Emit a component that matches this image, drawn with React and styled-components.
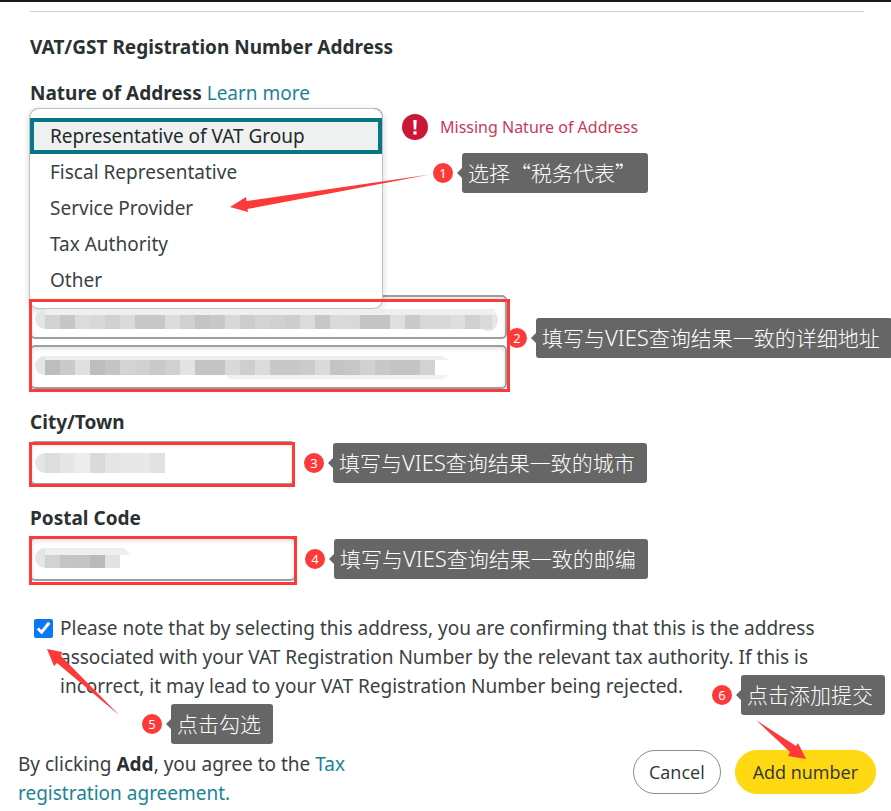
import React, { useState } from "react";
import styled, { createGlobalStyle, css } from "styled-components";

const GlobalStyle = createGlobalStyle`
  * {
    box-sizing: border-box;
  }
  body {
    margin: 0;
    background: #fff;
    color: #3a4143;
    font-family: "Noto Sans", "Noto Sans CJK SC", sans-serif;
    font-size: 19px;
    line-height: 29px;
    overflow-x: hidden;
  }
`;

const RED = "#fc3a3a";
const TEAL = "#077686";

const Page = styled.main`
  border-top: 2px solid #1a1a1c;
  padding-top: 9px;
`;

const Form = styled.form`
  padding: 0 27px 0 30px;
`;

const Divider = styled.hr`
  height: 1px;
  margin: 0;
  border: 0;
  background: #ced4d4;
`;

const Title = styled.h2`
  margin: 23px 0 22px;
  font-size: 19px;
  line-height: 24px;
  font-weight: 700;
  color: #2b3132;
`;

const Label = styled.label`
  display: block;
  line-height: 24px;
  font-weight: 700;
  color: #2b3132;
`;

const LabelRow = styled.div`
  display: flex;
  gap: 5px;
  line-height: 24px;
  margin-bottom: 3px;
`;

const Link = styled.a`
  color: #1c8394;
  text-decoration: none;
`;

const NatureRow = styled.div`
  position: relative;
  display: flex;
  align-items: flex-start;
  gap: 19px;
`;

const Dropdown = styled.div`
  position: relative;
  width: 353px;
`;

const Select = styled.select`
  display: block;
  width: 100%;
  height: 38px;
  border: 1px solid #a2a9a9;
  border-radius: 8px;
  background: #fff;
  appearance: none;
`;

const Menu = styled.ul`
  position: absolute;
  z-index: 1;
  top: 0;
  left: -1px;
  right: 0;
  margin: 0;
  padding: 9px 0 10px;
  list-style: none;
  background: #fff;
  border: 1px solid #bdc3c3;
  border-radius: 10px;
  box-shadow: 0 2px 6px rgba(15, 17, 17, 0.18);
`;

const Option = styled.li`
  height: 36px;
  padding: 0 20px;
  line-height: 36px;
  cursor: pointer;
  ${(props) => {
    if (props.$active) {
      return css`
        padding: 0 16px;
        line-height: 28px;
        color: #24292a;
        background: #eff1f1;
        border: 4px solid ${TEAL};
      `;
    }
  }}
`;

const Messages = styled.div`
  display: grid;
  gap: 7px;
`;

const ErrorText = styled.p`
  display: flex;
  align-items: center;
  gap: 12px;
  height: 38px;
  margin: 0;
  font-size: 16px;
  color: #c93a5a;
`;

const FieldRow = styled.div`
  display: flex;
  align-items: center;
  gap: 9px;
`;

const StreetRow = styled(FieldRow)`
  gap: 0;
  margin: 102px 0 21px;
`;

const Field = styled.div`
  position: relative;
  flex: none;
  display: grid;
  gap: 6px;
  width: ${(props) => props.$width}px;
`;

const FieldGroup = styled.div`
  display: grid;
  gap: 7px;
  margin-bottom: 21px;
`;

const Input = styled.input`
  width: 100%;
  height: 44px;
  padding: 0 10px;
  font: inherit;
  background: #fff;
  border: 2px solid #9aa0a0;
  border-radius: 5px;
  box-shadow: inset 0 2px 4px rgba(15, 17, 17, 0.12);
  outline: none;
`;

const Frame = styled.span`
  position: absolute;
  z-index: 2;
  inset: ${(props) => props.$inset};
  border: 3px solid ${RED};
  pointer-events: none;
`;

const Overlay = styled.svg`
  position: absolute;
  z-index: 2;
  top: ${(props) => props.$top}px;
  left: ${(props) => props.$left}px;
  overflow: visible;
  pointer-events: none;
`;

const Note = styled.div`
  position: relative;
  z-index: 3;
  display: flex;
  align-items: center;
  gap: 9px;
  white-space: nowrap;
`;

const NatureNote = styled(Note)`
  margin-left: 31px;
`;

const StreetNote = styled(Note)`
  margin-bottom: 8px;
`;

const ConfirmNote = styled(Note)`
  margin: 3px 0 0 112px;
`;

const SubmitNote = styled(Note)`
  position: absolute;
  right: -9px;
  bottom: 79px;
`;

const Step = styled.span`
  width: 20px;
  height: 20px;
  border-radius: 50%;
  background: ${RED};
  color: #fff;
  font-size: 13px;
  line-height: 20px;
  text-align: center;
`;

const Bubble = styled.span`
  position: relative;
  height: 40px;
  padding: 0 12px 0 6px;
  border-radius: 3px;
  background: #666;
  color: #fff;
  font-family: "Noto Sans CJK SC", sans-serif;
  font-weight: 300;
  font-size: 21px;
  line-height: 38px;
  &::before {
    content: "";
    position: absolute;
    top: 15px;
    left: -5px;
    border: 5px solid transparent;
    border-left: 0;
    border-right-color: #666;
  }
`;

const Latin = styled.span`
  font-family: "Noto Sans", sans-serif;
  font-size: 22px;
`;

const Confirm = styled.div`
  position: relative;
  display: flex;
  align-items: flex-start;
  gap: 7px;
  margin-top: 33px;
  padding-left: 4px;
  label {
    max-width: 790px;
  }
`;

const Checkbox = styled.input`
  flex: none;
  width: 19px;
  height: 19px;
  margin: 5px 0 0;
  accent-color: #0a78f5;
`;

const Footer = styled.footer`
  display: flex;
  justify-content: space-between;
  align-items: flex-start;
  margin-top: 6px;
  padding: 0 15px 3px 18px;
`;

const Agreement = styled.p`
  max-width: 370px;
  margin: 0;
  b {
    font-weight: 700;
    color: #2b3132;
  }
`;

const Actions = styled.div`
  position: relative;
  display: flex;
  gap: 14px;
`;

const Button = styled.button`
  height: 44px;
  padding: 0 15px;
  font-family: "Open Sans", sans-serif;
  font-size: 18px;
  color: #2f3638;
  background: #fff;
  border: 1px solid #868d8d;
  border-radius: 22px;
  cursor: pointer;
  ${(props) => {
    if (props.$primary) {
      return css`
        padding: 0 17px;
        background: #ffd814;
        border-color: #ffd814;
      `;
    }
  }}
`;

const options = [
  "Representative of VAT Group",
  "Fiscal Representative",
  "Service Provider",
  "Tax Authority",
  "Other",
];

// shades of the blocks that hide the private values, 15px per block
const street1 = ["d2d4d4", "c6c6c6", "dbdbdb", "d8d8d8", "d1d1d1", "d8dbda", "c7c9c9", "c7c9c9", "dbdddc", "cfd1d0", "c3c5c4", "c8c8c8", "d8d8d8", "cacdcc", "d3d5d4", "d0d2d1", "cdcdcd", "dcdcdc", "c7c7c7", "d8dbda", "d9d9d9", "c3c5c4", "c3c5c4", "dfdfdf", "cacaca", "d9d9d9", "d6d9d8", "dedede", "cfd1d0", "dadada"];
const street2 = ["bdbdbd", "cacaca", "dfe1e0", "bbbebd", "c4c4c4", "d4d4d4", "d1d1d1", "c9c9c9", "d0d0d0", "e3e3e3", "c4c4c4", "c4c4c4", "d9d9d9", "cecece", "dbdbdb", "c7c9c8", "c8c8c8", "cbcbcb", "dadada", "c4c4c4", "c6c8c7", "d0d2d1", "c8c8c8", "c4c4c4", "c4c4c4", "d1d3d2"];
const city = ["dddddd", "e6e6e6", "ededed", "dadada", "e5e5e5", "e8e8e8", "e7e9e8", "e1e1e1"];
const postal = ["d2d2d2", "c4c6c5", "c4c4c4", "bababa", "e1e3e2"];

function Mosaic({ top, shades, height, head = 0, foot = 0, tail = 0, round }) {
  const width = shades.length * 15;
  const middle = head + height / 2;
  return (
    <Overlay $top={top} $left={15} width={width} height={height + head + foot} aria-hidden="true">
      <ellipse cx="0" cy={(head + height) / 2} rx="10" ry={(head + height) / 2} fill="#e4e6e5" />
      {round && <ellipse cx={width - 7} cy={middle - 2} rx="10" ry={middle - 2} fill="#e6e6e6" />}
      <path d={`M0 0H${width + tail / 2}L${width + tail} ${head}H0Z`} fill="#eef0ef" />
      <path d={`M180 ${head + height}H${width + tail}L${width + tail / 2} ${head + height + foot}H185Z`} fill={foot ? "#f0f1f1" : "none"} />
      {shades.map((shade, i) => (
        <rect
          key={i}
          x={i * 15}
          y={head}
          width={round && i === shades.length - 1 ? 12 : 15}
          height={height}
          fill={"#" + shade}
        />
      ))}
    </Overlay>
  );
}

export default function App() {
  const [nature, setNature] = useState(options[0]);
  const [confirmed, setConfirmed] = useState(true);

  return (
    <>
      <GlobalStyle />
      <Page>
        <Form id="vat-form" onSubmit={(e) => e.preventDefault()}>
          <Divider />
          <Title>VAT/GST Registration Number Address</Title>

          <LabelRow>
            <Label htmlFor="nature">Nature of Address</Label>
            <Link href="#learn-more">Learn more</Link>
          </LabelRow>
          <NatureRow>
            <Dropdown>
              <Select id="nature" value={nature} onChange={(e) => setNature(e.target.value)}>
                {options.map((name) => (
                  <option key={name}>{name}</option>
                ))}
              </Select>
              <Menu role="listbox" aria-label="Nature of Address">
                {options.map((name) => (
                  <Option
                    key={name}
                    role="option"
                    aria-selected={name === nature}
                    $active={name === nature}
                    onClick={() => setNature(name)}
                  >
                    {name}
                  </Option>
                ))}
              </Menu>
            </Dropdown>
            <Messages>
              <ErrorText>
                <svg width="26" height="26" viewBox="0 0 26 26" aria-hidden="true">
                  <circle cx="13" cy="13" r="13" fill="#cc1637" />
                  <path d="M11.3 6h3.4l-.5 9.5h-2.4zM11.4 17.2h3.2v3.2h-3.2z" fill="#fff" />
                </svg>
                Missing Nature of Address
              </ErrorText>
              <NatureNote>
                <Step>1</Step>
                <Bubble>选择“税务代表”</Bubble>
              </NatureNote>
            </Messages>
            <Overlay $top={66} $left={200} width="200" height="38" aria-hidden="true">
              <path d="M200 0.5L16.5 27L16 23L0 33L18 38L17.5 35Z" fill={RED} />
            </Overlay>
          </NatureRow>

          <StreetRow>
            <Field $width={477}>
              <Input aria-label="Address line 1" />
              <Input aria-label="Address line 2" />
              <Mosaic top={14} shades={street1} head={6} height={14} round />
              <Mosaic top={61} shades={street2} head={4} height={15} foot={4} tail={14} />
              <Frame $inset="4px -3px -3px -1px" />
            </Field>
            <StreetNote>
              <Step>2</Step>
              <Bubble>填写与<Latin>VIES</Latin>查询结果一致的详细地址</Bubble>
            </StreetNote>
          </StreetRow>

          <FieldGroup>
            <Label htmlFor="city">City/Town</Label>
            <FieldRow>
              <Field $width={265}>
                <Input id="city" />
                <Mosaic top={12} shades={city} height={20} />
                <Frame $inset="1px 0 -2px -1px" />
              </Field>
              <Note>
                <Step>3</Step>
                <Bubble>填写与<Latin>VIES</Latin>查询结果一致的城市</Bubble>
              </Note>
            </FieldRow>
          </FieldGroup>

          <FieldGroup>
            <Label htmlFor="postal">Postal Code</Label>
            <FieldRow>
              <Field $width={266}>
                <Input id="postal" />
                <Mosaic top={11} shades={postal} head={7} height={13} tail={10} />
                <Frame $inset="-1px -1px -4px -1px" />
              </Field>
              <Note>
                <Step>4</Step>
                <Bubble>填写与<Latin>VIES</Latin>查询结果一致的邮编</Bubble>
              </Note>
            </FieldRow>
          </FieldGroup>

          <Confirm>
            <Checkbox
              id="confirm"
              type="checkbox"
              checked={confirmed}
              onChange={(e) => setConfirmed(e.target.checked)}
            />
            <label htmlFor="confirm">
              Please note that by selecting this address, you are confirming that this is the address
              associated with your VAT Registration Number by the relevant tax authority. If this is
              incorrect, it may lead to your VAT Registration Number being rejected.
            </label>
            <Overlay $top={35} $left={17} width="73" height="67" aria-hidden="true">
              <path d="M0 0L15 3L14 7L72 66L10 14L7 17Z" fill={RED} />
            </Overlay>
          </Confirm>
          <ConfirmNote>
            <Step>5</Step>
            <Bubble>点击勾选</Bubble>
          </ConfirmNote>
        </Form>

        <Footer>
          <Agreement>
            By clicking <b>Add</b>, you agree to the <Link href="#agreement">Tax registration agreement.</Link>
          </Agreement>
          <Actions>
            <Button type="button">Cancel</Button>
            <Button type="submit" form="vat-form" $primary>Add number</Button>
            <Overlay $top={-30} $left={123} width="50" height="40" aria-hidden="true">
              <path d="M0 0L40 26L42 23L50 39L32 36L34 32Z" fill={RED} />
            </Overlay>
            <SubmitNote>
              <Step>6</Step>
              <Bubble>点击添加提交</Bubble>
            </SubmitNote>
          </Actions>
        </Footer>
      </Page>
    </>
  );
}
